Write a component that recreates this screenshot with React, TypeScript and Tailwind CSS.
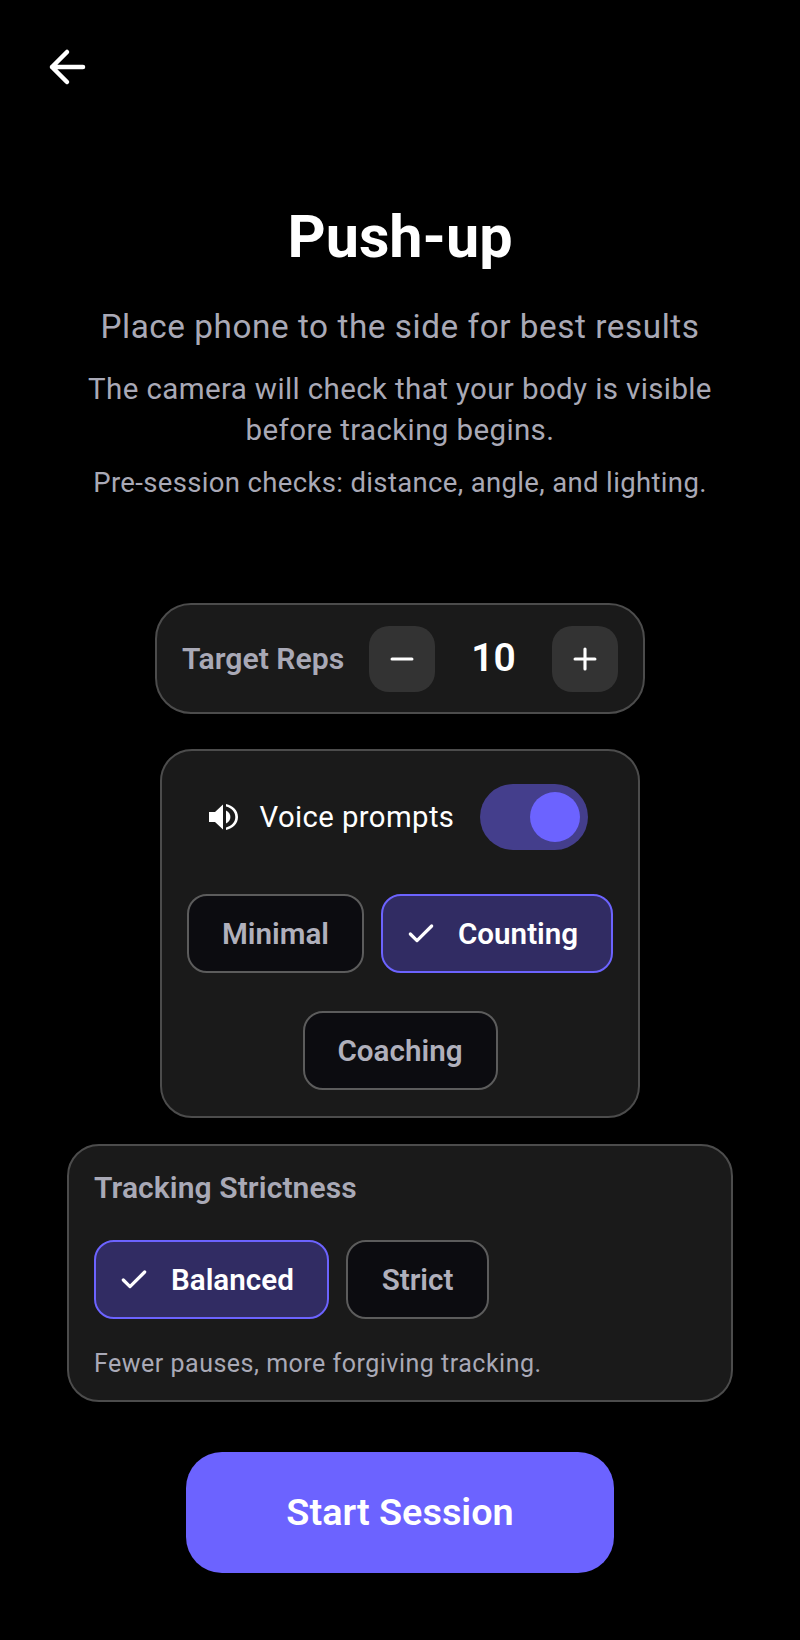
import { Check, Minus, Plus } from 'lucide-react'

function Chip({ label, selected }: { label: string; selected?: boolean }) {
  return (
    <div
      className={
        selected
          ? 'h-[79px] flex items-center gap-[21px] rounded-[20px] border-2 border-[#6c63ff] bg-[#312c63] pl-[22px] text-[29.6px] font-semibold text-white'
          : 'h-[79px] flex items-center justify-center rounded-[20px] border-2 border-[#5c5c5c] bg-[#0c0c10] text-[29.6px] font-semibold text-[#b0b0bc]'
      }
    >
      {selected && <Check className="w-[32px] h-[32px]" strokeWidth={2.4} />}
      <span className="pt-[2px]">{label}</span>
    </div>
  )
}

function StepButton({ children }: { children: React.ReactNode }) {
  return <div className="w-[66px] h-[66px] flex items-center justify-center rounded-[20px] bg-[#333333] text-white">{children}</div>
}

export default function App() {
  return (
    <div className="w-[800px] h-[1640px] bg-black text-white flex flex-col items-center font-['Roboto',sans-serif] overflow-hidden">
      <div className="w-full pl-[46px] pt-[43px]">
        <svg width="48" height="48" viewBox="0 0 48 48" fill="none" stroke="white" strokeWidth="4.5" strokeLinecap="round" strokeLinejoin="round">
          <path d="M6 24h31M21 9 6 24l15 15" />
        </svg>
      </div>

      <h1 className="mt-[111px] text-[59.3px] leading-[70px] font-bold">Push-up</h1>
      <p className="mt-[35px] text-[33.3px] leading-[40px] text-[#a9a9b6] tracking-[0.55px]">Place phone to the side for best results</p>
      <p className="mt-[22px] text-[29.5px] leading-[41px] text-[#a9a9b6] text-center tracking-[0.38px]">
        The camera will check that your body is visible
        <br />
        before tracking begins.
      </p>
      <p className="mt-[12px] text-[27.5px] leading-[40px] text-[#a9a9b6] tracking-[0.35px]">Pre-session checks: distance, angle, and lighting.</p>

      <div className="mt-[100px] w-[490px] h-[111px] flex items-center justify-between rounded-[36px] border-2 border-[#4c4c4c] bg-[#1a1a1a] pl-[25px] pr-[25px]">
        <span className="text-[30.2px] font-semibold text-[#a9a9b6]">Target Reps</span>
        <div className="flex items-center">
          <StepButton><Minus className="w-[34px] h-[34px]" strokeWidth={2.2} /></StepButton>
          <span className="w-[117px] text-center text-[39px] font-semibold">10</span>
          <StepButton><Plus className="w-[34px] h-[34px]" strokeWidth={2.2} /></StepButton>
        </div>
      </div>

      <div className="mt-[35px] w-[480px] h-[369px] flex flex-col items-center rounded-[32px] border-2 border-[#4c4c4c] bg-[#1a1a1a] pt-[33px]">
        <div className="flex items-center pr-[3px]">
          <svg width="30" height="30" viewBox="0 0 30 30" fill="white">
            <path d="M0 10h6l8-7.500v25L6 20H0z" />
            <path d="M17 8.500c2.900 1.200 4.400 3.700 4.400 6.500s-1.500 5.300-4.400 6.500z" />
            <path d="M17 2c6.800 1.300 12 6.400 12 13s-5.200 11.700-12 13v-2.600c5.300-1.300 9.300-5.200 9.300-10.400S22.300 5.900 17 4.600z" />
          </svg>
          <span className="ml-[21px] pt-[2px] text-[29.3px] tracking-[0.4px]">Voice prompts</span>
          <div className="ml-[26px] w-[108px] h-[66px] flex items-center justify-end rounded-full bg-[#443e8c] pr-[8px]">
            <div className="w-[50px] h-[50px] rounded-full bg-[#6c63ff]" />
          </div>
        </div>
        <div className="mt-[44px] flex gap-[17px]">
          <div className="w-[177px]"><Chip label="Minimal" /></div>
          <div className="w-[232px]"><Chip label="Counting" selected /></div>
        </div>
        <div className="mt-[38px] w-[195px]"><Chip label="Coaching" /></div>
      </div>

      <div className="mt-[26px] w-[666px] h-[258px] flex flex-col rounded-[32px] border-2 border-[#4c4c4c] bg-[#1a1a1a] pl-[25px] pt-[24px]">
        <span className="text-[30px] leading-[36px] font-semibold text-[#a9a9b6] tracking-[0.1px]">Tracking Strictness</span>
        <div className="mt-[34px] flex gap-[17px]">
          <div className="w-[235px]"><Chip label="Balanced" selected /></div>
          <div className="w-[143px]"><Chip label="Strict" /></div>
        </div>
        <span className="mt-[29px] text-[25px] leading-[32px] text-[#a9a9b6] tracking-[0.5px]">Fewer pauses, more forgiving tracking.</span>
      </div>

      <div className="mt-[50px] w-[428px] h-[121px] flex items-center justify-center rounded-[36px] bg-[#6c63ff] text-[37.8px] font-semibold">
        Start Session
      </div>
    </div>
  )
}
